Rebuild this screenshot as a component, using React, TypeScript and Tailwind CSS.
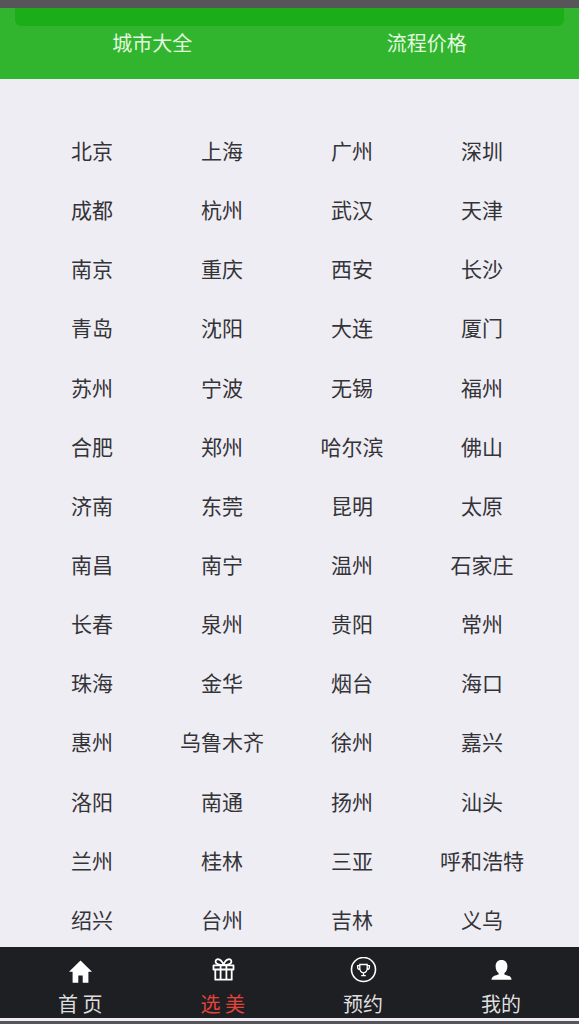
import type { ReactNode } from "react";

const CITIES = [
  "北京", "上海", "广州", "深圳",
  "成都", "杭州", "武汉", "天津",
  "南京", "重庆", "西安", "长沙",
  "青岛", "沈阳", "大连", "厦门",
  "苏州", "宁波", "无锡", "福州",
  "合肥", "郑州", "哈尔滨", "佛山",
  "济南", "东莞", "昆明", "太原",
  "南昌", "南宁", "温州", "石家庄",
  "长春", "泉州", "贵阳", "常州",
  "珠海", "金华", "烟台", "海口",
  "惠州", "乌鲁木齐", "徐州", "嘉兴",
  "洛阳", "南通", "扬州", "汕头",
  "兰州", "桂林", "三亚", "呼和浩特",
  "绍兴", "台州", "吉林", "义乌",
];

function HomeIcon() {
  return (
    <svg className="size-7" viewBox="0 0 28 28" fill="currentColor" aria-hidden="true">
      <path d="M14.5 3.5 3 14.7h3.6v11.1h5.7v-7.3h4.4v7.3h5.7V14.7H26z" />
    </svg>
  );
}

function GiftIcon() {
  return (
    <svg
      className="size-7"
      viewBox="0 0 28 28"
      fill="none"
      stroke="currentColor"
      strokeWidth="1.8"
      strokeLinejoin="round"
      aria-hidden="true"
    >
      <path d="M4.5 8.3h20v4.2h-20zM6.3 12.5h16.4v10.2H6.3zM11.6 8.3v14.4M17.4 8.3v14.4" />
      <path d="M14.5 8C11.4 8 6.4 7.6 6.6 4.4 6.8.8 12.6 1.6 14.5 8zM14.5 8c3.1 0 8.1-.4 7.9-3.6C22.2.8 16.4 1.6 14.5 8z" />
    </svg>
  );
}

function TrophyIcon() {
  return (
    <svg className="size-7" viewBox="0 0 28 28" fill="none" stroke="currentColor" aria-hidden="true">
      <circle cx="14.5" cy="12.5" r="12" strokeWidth="1.6" />
      <path
        d="M10.8 7.5h7.4v3.4c0 2.9-1.8 4.6-3.7 4.9-1.9-.3-3.7-2-3.7-4.9zM10.8 8.7H8.6v1.6c0 1.4 1 2.2 2.6 2.2M18.2 8.7h2.2v1.6c0 1.4-1 2.2-2.6 2.2M14.5 15.8v2.6M12.2 18.6h4.6"
        strokeWidth="1.3"
      />
    </svg>
  );
}

function UserIcon() {
  return (
    <svg className="size-7" viewBox="0 0 28 28" fill="currentColor" aria-hidden="true">
      <path d="M14.5 3c-3.8 0-5.9 2.6-5.9 6.2 0 3.2 1.3 5.6 3 6.9v1.3C8.8 18.4 4.5 18.8 4.5 22.7h20c0-3.9-4.3-4.3-7.1-5.3v-1.3c1.7-1.3 3-3.7 3-6.9C20.4 5.6 18.3 3 14.5 3z" />
    </svg>
  );
}

type NavItem = { label: string; href: string; icon: ReactNode; active?: boolean };

const NAV: NavItem[] = [
  { label: "首 页", href: "#home", icon: <HomeIcon /> },
  { label: "选 美", href: "#gallery", icon: <GiftIcon />, active: true },
  { label: "预约", href: "#booking", icon: <TrophyIcon /> },
  { label: "我的", href: "#me", icon: <UserIcon /> },
];

export default function App() {
  return (
    <div className="flex min-h-screen flex-col bg-[#eeedf4] font-['Noto_Sans_CJK_SC',sans-serif]">
      <div className="h-2 bg-[#58555a]" />
      <header className="bg-[#31b52e] px-[15px]">
        <div className="h-[18px] rounded-b-md bg-[#1cae18]" />
        <nav className="grid h-[53px] grid-cols-2 pt-[2px] text-center text-[20px] leading-[30px] text-[#e2f8df]">
          <a href="#cities">城市大全</a>
          <a href="#prices">流程价格</a>
        </nav>
      </header>

      <main id="cities" className="flex flex-1 flex-col pt-14 pr-8 pb-[13px] pl-[27px]">
        <ul className="grid flex-1 grid-cols-4 content-between text-center text-[21px] leading-[30px] text-[#343337]">
          {CITIES.map((city) => (
            <li key={city}>
              <a href={`#${city}`}>{city}</a>
            </li>
          ))}
        </ul>
      </main>

      <footer className="border-b-3 border-[#58555a] bg-[#1e1f23]">
        <nav className="flex h-[71px] justify-between px-[58px] pt-[10px]">
          {NAV.map((item) => (
            <a key={item.href} href={item.href} className="flex flex-col items-center text-white">
              {item.icon}
              <span
                className={
                  item.active
                    ? "mt-[5px] text-[20px] leading-[28px] text-[#e5433b]"
                    : "mt-[5px] text-[20px] leading-[28px] text-[#dededf]"
                }
              >
                {item.label}
              </span>
            </a>
          ))}
        </nav>
        <div className="h-[3px] bg-[#eeedf4]" />
      </footer>
    </div>
  );
}
